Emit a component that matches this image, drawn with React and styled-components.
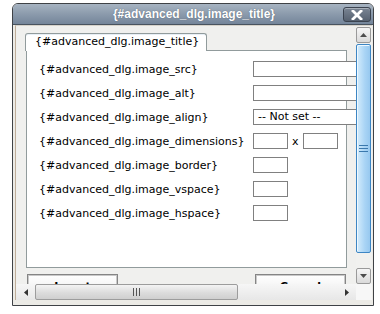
import React from "react";
import styled, { createGlobalStyle } from "styled-components";

const Global = createGlobalStyle`
  html, body { margin: 0; padding: 0; background: #ffffff; }
  body { padding: 3px 0 0 12px; font-family: "DejaVu Sans", Verdana, sans-serif; }
  * { box-sizing: border-box; }
`;

const Frame = styled.div`
  width: 362px;
  height: 303px;
  border: 1px solid #3f4246;
  border-radius: 6px 6px 0 0;
  background: #f0f0ee;
  display: flex;
  flex-direction: column;
  overflow: hidden;
`;

const TitleBar = styled.div`
  position: relative;
  height: 21px;
  flex: none;
  background: linear-gradient(#a7b4c2 0%, #8e9dae 45%, #74859a 100%);
  border-bottom: 1px solid #48535f;
  color: #ffffff;
  font-family: "Liberation Sans", Arial, sans-serif;
  font-weight: bold;
  font-size: 12px;
  line-height: 20px;
  text-align: center;
  padding-left: 2px;
  text-shadow: 0 0 1px rgba(40, 50, 60, 0.6);
`;

const CloseButton = styled.div`
  position: absolute;
  right: 2px;
  top: 3px;
  width: 28px;
  height: 15px;
  border: 1px solid #3b4350;
  border-radius: 3px;
  background: linear-gradient(#7a8594, #566170);
  box-shadow: inset 0 1px 0 rgba(255, 255, 255, 0.35);
  display: flex;
  align-items: center;
  justify-content: center;
`;

const Body = styled.div`
  flex: 1;
  padding: 0 1px 5px 2px;
  background: #ecebe6;
`;

const Viewport = styled.div`
  display: grid;
  grid-template-columns: 340px 16px;
  grid-template-rows: 258px 16px;
  border-left: 1px solid #bfae9a;
  border-top: 1px solid #d6d2ca;
  width: 357px;
`;

const Content = styled.div`
  overflow: hidden;
  background: #f0f0ee;
  padding: 7px 0 0 9px;
`;

const TabStrip = styled.div`
  display: flex;
  height: 17px;
`;

const Tab = styled.div`
  width: 182px;
  height: 18px;
  background: #ffffff;
  border: 1px solid #919b9c;
  border-bottom: none;
  border-radius: 3px 3px 0 0;
  box-shadow: inset 0 1px 0 #e7eef5;
  font-size: 11px;
  line-height: 16px;
  padding-left: 9px;
  color: #000;
  white-space: nowrap;
  position: relative;
  z-index: 1;
`;

const Panel = styled.div`
  margin-left: 1px;
  width: 321px;
  height: 218px;
  background: #ffffff;
  border: 1px solid #919b9c;
  padding: 6px 0 0 12px;
`;

const Row = styled.div`
  display: grid;
  grid-template-columns: 214px auto;
  align-items: center;
  height: 24px;
  white-space: nowrap;
`;

const Label = styled.div`
  font-size: 11px;
  color: #000;
`;

const Field = styled.div`
  display: flex;
  align-items: center;
`;

const Input = styled.div`
  width: ${(p) => p.$w}px;
  height: 16px;
  border: 1px solid #808080;
  background: #fff;
  flex: none;
`;

const Select = styled.div`
  width: 200px;
  height: 16px;
  border: 1px solid #808080;
  background: #fff;
  font-size: 11px;
  line-height: 14px;
  padding-left: 4px;
  color: #000;
  flex: none;
`;

const Times = styled.span`
  font-size: 11px;
  margin: 0 4px 0 4px;
  color: #000;
`;

const Buttons = styled.div`
  display: flex;
  justify-content: space-between;
  width: 319px;
  margin: 6px 0 0 2px;
`;

const Button = styled.div`
  width: 91px;
  height: 26px;
  border: 1px solid #858585;
  box-shadow: inset 0 0 0 1px #c9c9c9;
  background: linear-gradient(#ffffff, #e9e9e9);
  font-size: 11px;
  font-weight: bold;
  text-align: center;
  line-height: 24px;
  color: #000;
`;

const VScroll = styled.div`
  display: flex;
  flex-direction: column;
  background: #f1f1ef;
  padding-top: 1px;
`;

const ArrowBtn = styled.div`
  width: 15px;
  height: 16px;
  flex: none;
  border: 1px solid #9a9a9a;
  border-radius: 2px;
  background: linear-gradient(#f6f6f6, #dadada);
  display: flex;
  align-items: center;
  justify-content: center;
`;

const VThumb = styled.div`
  width: 15px;
  margin-top: 1px;
  height: 209px;
  flex: none;
  border: 1px solid #3d86c4;
  border-radius: 2px;
  background: linear-gradient(90deg, #d4ecfc, #a9d4f5 60%, #97c8ef);
  box-shadow: inset 1px 1px 0 #eef8ff;
  display: flex;
  align-items: center;
  justify-content: center;
`;

const VTrack = styled.div`
  flex: 1;
`;

const HScroll = styled.div`
  display: flex;
  align-items: stretch;
  background: linear-gradient(#f6f6f6, #e7e7e7);
`;

const HArrow = styled.div`
  width: 19px;
  flex: none;
  display: flex;
  align-items: center;
  justify-content: center;
`;

const HThumb = styled.div`
  width: 203px;
  flex: none;
  border: 1px solid #9c9c9c;
  border-radius: 2px;
  background: linear-gradient(#f4f4f4, #dcdcdc 55%, #cfcfcf);
  display: flex;
  align-items: center;
  justify-content: center;
`;

const HTrack = styled.div`
  flex: 1;
`;

const Corner = styled.div`
  background: #f7f7f7;
`;

const rows = [
  { label: "{#advanced_dlg.image_src}", kind: "text" },
  { label: "{#advanced_dlg.image_alt}", kind: "text" },
  { label: "{#advanced_dlg.image_align}", kind: "select" },
  { label: "{#advanced_dlg.image_dimensions}", kind: "dims" },
  { label: "{#advanced_dlg.image_border}", kind: "small" },
  { label: "{#advanced_dlg.image_vspace}", kind: "small" },
  { label: "{#advanced_dlg.image_hspace}", kind: "small" },
];

function renderField(kind) {
  if (kind === "text") return <Input $w={200} />;
  if (kind === "select") return <Select>-- Not set --</Select>;
  if (kind === "dims")
    return (
      <>
        <Input $w={35} />
        <Times>x</Times>
        <Input $w={35} />
      </>
    );
  return <Input $w={35} />;
}

export default function App() {
  return (
    <>
      <Global />
      <Frame>
        <TitleBar>
          {"{#advanced_dlg.image_title}"}
          <CloseButton>
            <svg width="12" height="10" viewBox="0 0 12 10">
              <path d="M2 1 L10 9 M10 1 L2 9" stroke="#fff" strokeWidth="2.8" strokeLinecap="square" />
            </svg>
          </CloseButton>
        </TitleBar>
        <Body>
          <Viewport>
            <Content>
              <TabStrip>
                <Tab>{"{#advanced_dlg.image_title}"}</Tab>
              </TabStrip>
              <Panel>
                {rows.map((r) => (
                  <Row key={r.label}>
                    <Label>{r.label}</Label>
                    <Field>{renderField(r.kind)}</Field>
                  </Row>
                ))}
              </Panel>
              <Buttons>
                <Button>Insert</Button>
                <Button>Cancel</Button>
              </Buttons>
            </Content>
            <VScroll>
              <ArrowBtn>
                <svg width="7" height="4" viewBox="0 0 7 4">
                  <path d="M0 4 L3.5 0 L7 4 Z" fill="#4d4d4d" />
                </svg>
              </ArrowBtn>
              <VThumb>
                <svg width="9" height="7" viewBox="0 0 9 7">
                  <path d="M0 0.5 H9 M0 3.5 H9 M0 6.5 H9" stroke="#3a78ad" strokeWidth="1" />
                </svg>
              </VThumb>
              <VTrack />
              <ArrowBtn>
                <svg width="7" height="4" viewBox="0 0 7 4">
                  <path d="M0 0 L3.5 4 L7 0 Z" fill="#4d4d4d" />
                </svg>
              </ArrowBtn>
            </VScroll>
            <HScroll>
              <HArrow>
                <svg width="4" height="7" viewBox="0 0 4 7">
                  <path d="M4 0 L0 3.5 L4 7 Z" fill="#333" />
                </svg>
              </HArrow>
              <HThumb>
                <svg width="7" height="8" viewBox="0 0 7 8">
                  <path d="M0.5 0 V8 M3.5 0 V8 M6.5 0 V8" stroke="#555" strokeWidth="1" />
                </svg>
              </HThumb>
              <HTrack />
              <HArrow>
                <svg width="4" height="7" viewBox="0 0 4 7">
                  <path d="M0 0 L4 3.5 L0 7 Z" fill="#333" />
                </svg>
              </HArrow>
            </HScroll>
            <Corner />
          </Viewport>
        </Body>
      </Frame>
    </>
  );
}
